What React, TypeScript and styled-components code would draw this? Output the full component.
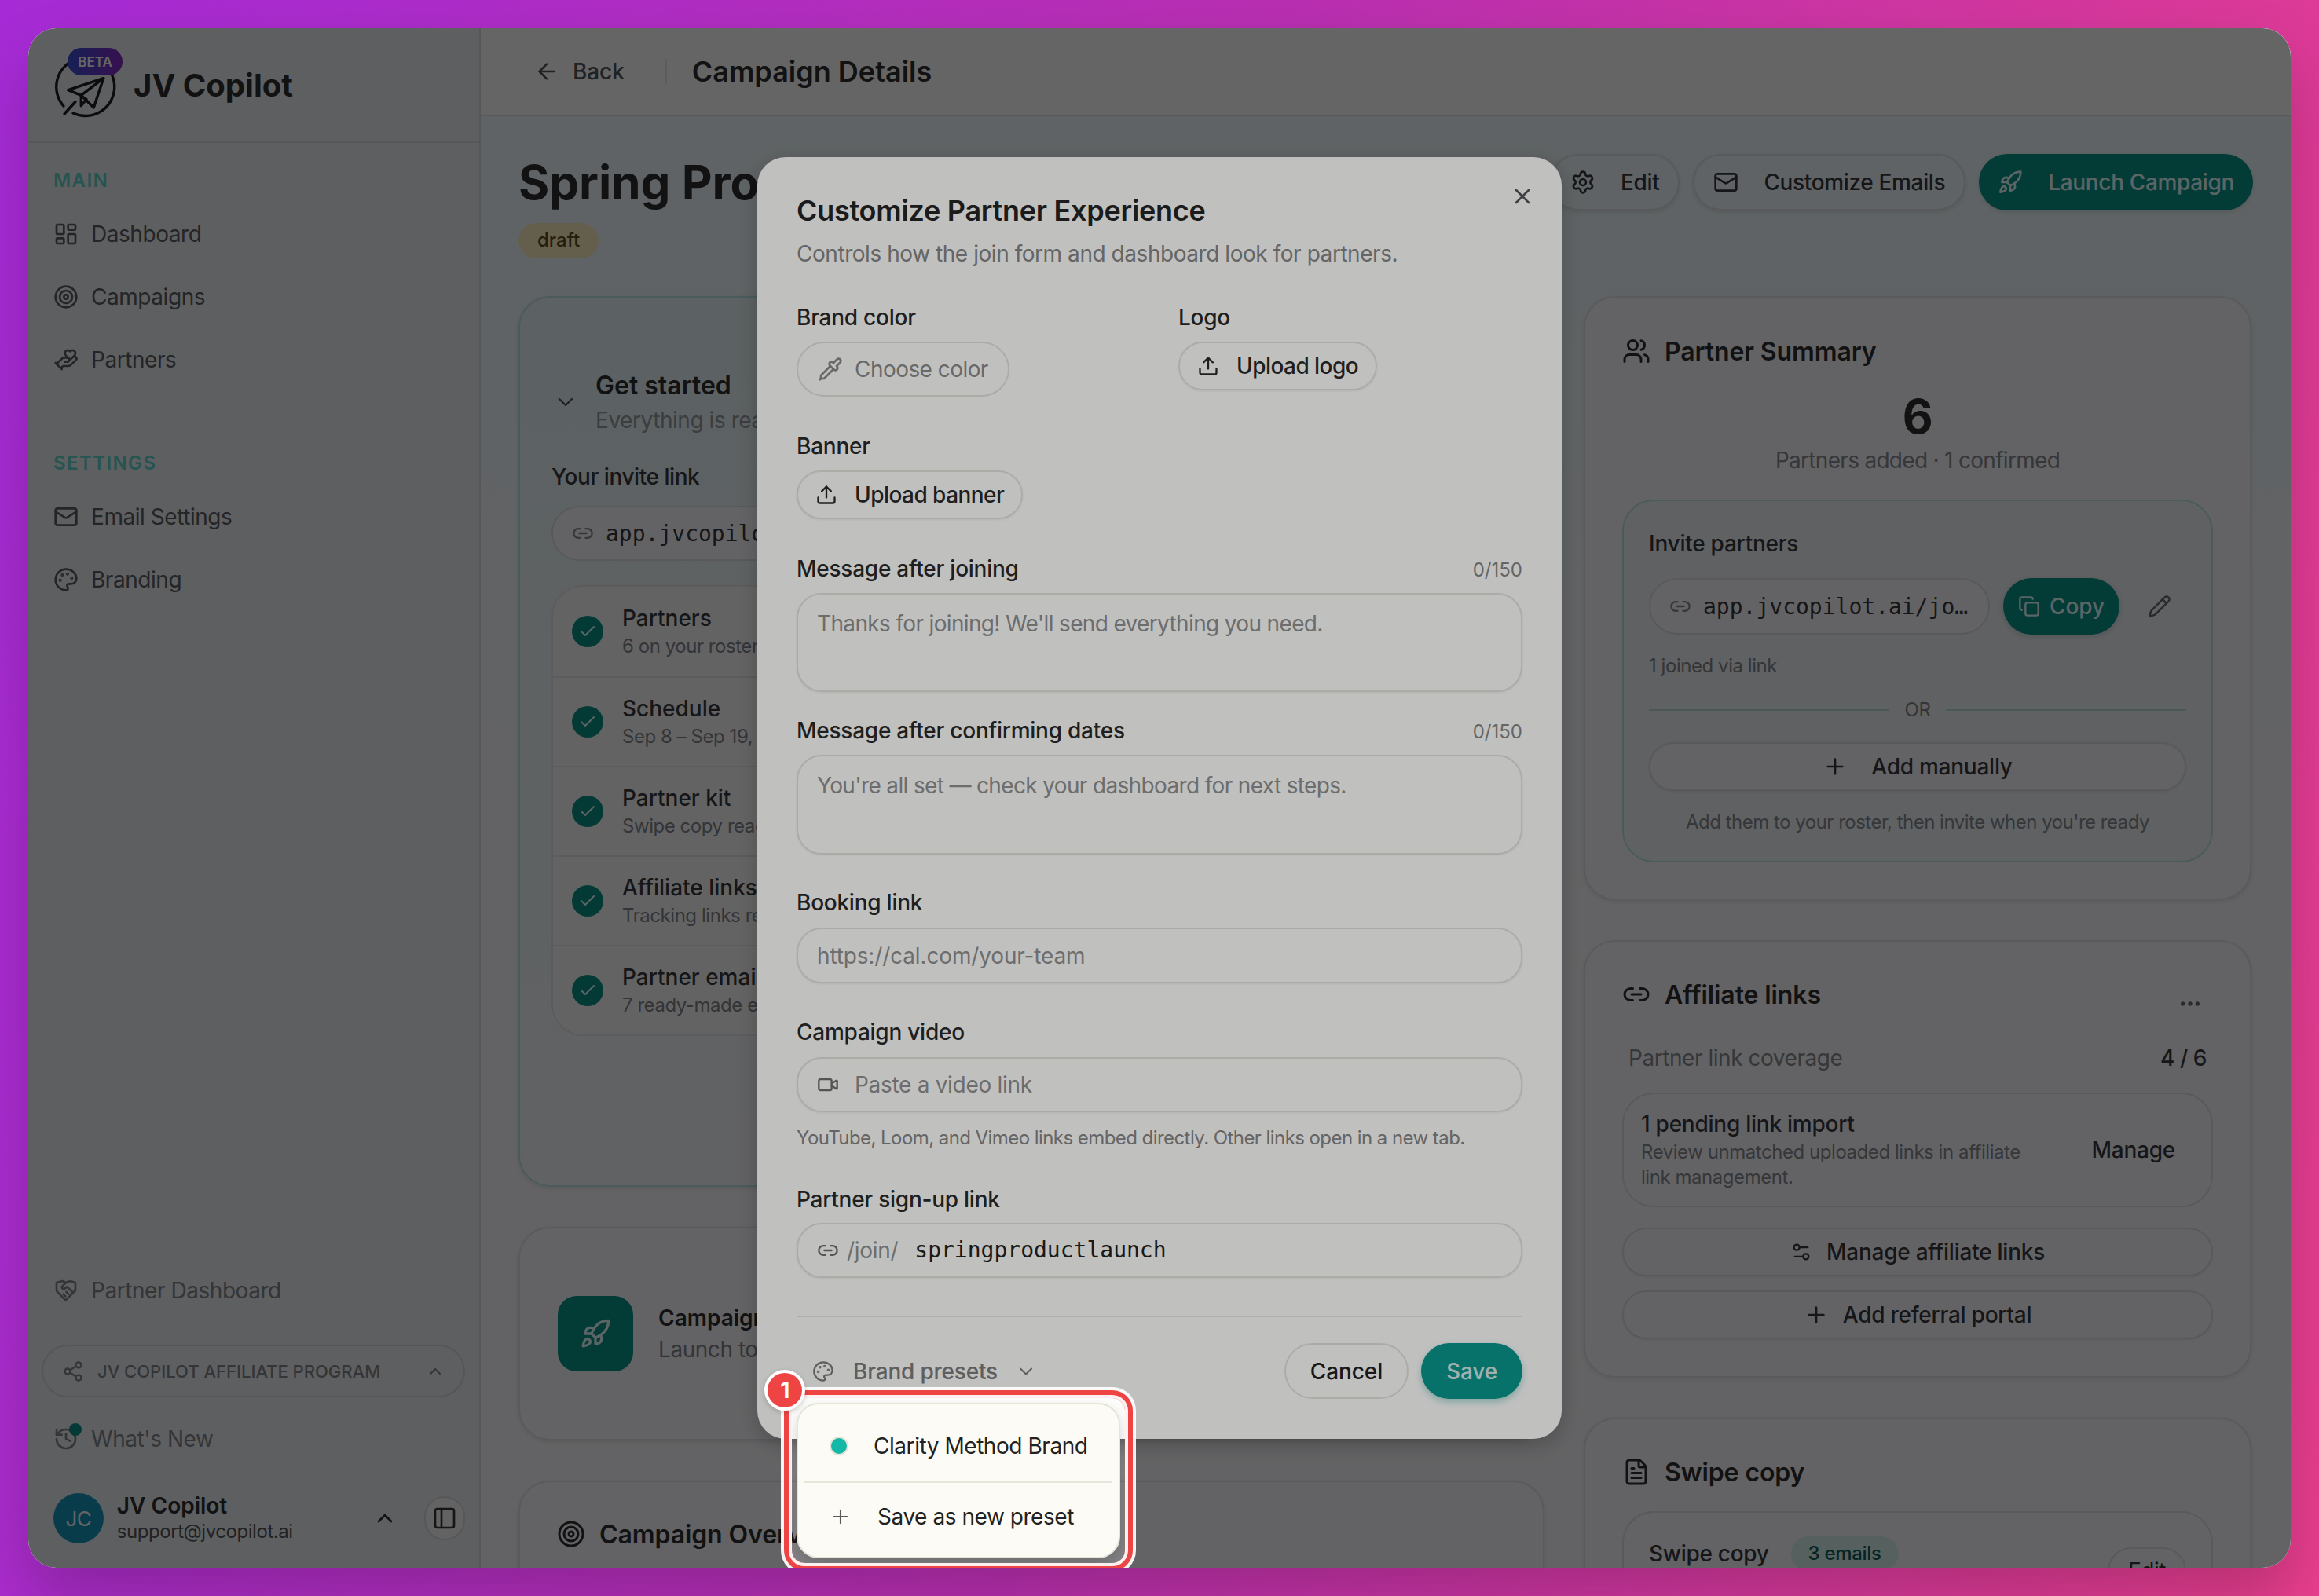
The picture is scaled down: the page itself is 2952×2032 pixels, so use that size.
import React from 'react'
import styled, { createGlobalStyle } from 'styled-components'
import {
  ArrowLeft, Check, ChevronDown, ChevronUp, Copy, Ellipsis, FileText, HandHeart, History, LayoutDashboard, Link2,
  Mail, Palette, PanelLeft, Pencil, Pipette, Plus, Rocket, Settings, Settings2, Share2, Target, Upload, Users, Video, X,
} from 'lucide-react'

const GlobalStyle = createGlobalStyle`
  html, body { margin: 0; padding: 0; overflow: hidden; }
  * { box-sizing: border-box; }
  body { font-family: Inter, "Liberation Sans", sans-serif; color: #2a2a2e; letter-spacing: -0.45px; }
  svg { flex-shrink: 0; }
`

const MONO = '"DejaVu Sans Mono", "Liberation Mono", monospace'

const Backdrop = styled.div`
  width: 2952px;
  height: 2032px;
  padding: 36px;
  background: linear-gradient(102deg, #a62bd6 0%, #b92fb0 50%, #e93e8e 100%);
`

const AppWindow = styled.div`
  position: relative;
  width: 2880px;
  height: 1960px;
  display: flex;
  border-radius: 36px;
  overflow: hidden;
  background: #fff;
  box-shadow: 0 40px 80px rgba(0, 0, 0, 0.2);
`

/* ---------- sidebar ---------- */

const Sidebar = styled.aside`
  width: 576px;
  flex-shrink: 0;
  display: flex;
  flex-direction: column;
  background: #eef0f5;
  border-right: 2px solid #dcdde2;
`

const Brand = styled.div`
  height: 146px;
  flex-shrink: 0;
  display: flex;
  align-items: center;
  gap: 19px;
  padding-left: 24px;
  border-bottom: 2px solid #dcdde2;
`

const BrandMark = styled.div`
  position: relative;
  width: 114px;
  height: 100px;
`

const BetaTag = styled.span`
  position: absolute;
  left: 26px;
  top: 3px;
  width: 70px;
  height: 35px;
  border-radius: 18px;
  display: flex;
  align-items: center;
  justify-content: center;
  font-size: 17px;
  font-weight: 600;
  letter-spacing: 0;
  color: #fff;
  background: linear-gradient(90deg, #3b54d6, #8a2bc9);
`

const BrandName = styled.span`
  font-size: 40px;
  font-weight: 700;
  letter-spacing: 0;
  color: #2f2f33;
  margin-left: -23px;
`

const NavSection = styled.div`
  padding: 32px 0 0 32px;
`

const SectionLabel = styled.div<{ $top?: number }>`
  height: 32px;
  line-height: 32px;
  font-size: 24px;
  font-weight: 600;
  letter-spacing: 1.4px;
  color: #62d6ce;
  margin-top: ${(p) => p.$top ?? 0}px;
  margin-bottom: 12px;
`

const NavItem = styled.div<{ $muted?: boolean }>`
  height: 80px;
  display: flex;
  align-items: center;
  gap: 16px;
  font-size: 28px;
  color: ${(p) => (p.$muted ? '#85878c' : '#5c5e63')};
`

const NavIconWrap = styled.span`
  position: relative;
  display: flex;
  width: 32px;
  height: 32px;
`

const NewDot = styled.span`
  position: absolute;
  right: -4px;
  top: -4px;
  width: 16px;
  height: 16px;
  border-radius: 50%;
  background: #0d9488;
`

const SidebarBottom = styled.div`
  margin-top: auto;
  padding: 0 18px 30px 32px;
`

const ProgramPill = styled.div`
  margin: 29px 0 13px -15px;
  height: 67px;
  border: 2px solid #d8d9de;
  border-radius: 34px;
  display: flex;
  align-items: center;
  gap: 17px;
  padding: 0 24px;
  font-size: 22px;
  font-weight: 500;
  letter-spacing: 0;
  color: #85878c;
  svg:last-child { margin-left: auto; }
`

const UserRow = styled.div`
  margin-top: 28px;
  display: flex;
  align-items: center;
`

const Avatar = styled.div`
  width: 64px;
  height: 64px;
  border-radius: 50%;
  background: #1a9abf;
  color: #fff;
  display: flex;
  align-items: center;
  justify-content: center;
  font-size: 26px;
`

const UserText = styled.div`
  margin-left: 17px;
  width: 326px;
`

const UserName = styled.div`
  font-size: 28px;
  font-weight: 600;
  line-height: 34px;
  letter-spacing: 0;
  color: #2f2f33;
`

const UserMail = styled.div`
  font-size: 24px;
  line-height: 32px;
  color: #55575c;
`

const SideToggle = styled.div`
  margin-left: 34px;
  width: 52px;
  height: 56px;
  border-radius: 26px;
  background: #fbfbfd;
  border: 2px solid #dcdde2;
  display: flex;
  align-items: center;
  justify-content: center;
`

/* ---------- main area ---------- */

const Main = styled.main`
  flex: 1;
  min-width: 0;
  display: flex;
  flex-direction: column;
  background: linear-gradient(180deg, #edfbff 0%, #fbfbff 55%);
`

const TopBar = styled.header`
  height: 112px;
  flex-shrink: 0;
  display: flex;
  align-items: center;
  padding-left: 68px;
  background: #fff;
  border-bottom: 2px solid #e2e3e8;
  font-size: 28px;
  font-weight: 500;
  color: #55575c;
`

const BackText = styled.span`
  margin-left: 17px;
  letter-spacing: -0.1px;
`

const BarDivider = styled.span`
  width: 2px;
  height: 32px;
  margin: 0 32px 0 52px;
  background: #e8e8ec;
`

const BarTitle = styled.span`
  font-size: 36px;
  font-weight: 600;
  letter-spacing: 0;
  color: #2f2f33;
`

const Content = styled.div`
  padding: 48px 48px 0 48px;
`

const TitleRow = styled.div`
  display: flex;
  justify-content: space-between;
  height: 133px;
`

const PageTitle = styled.h1`
  margin: 0;
  font-size: 60px;
  line-height: 72px;
  font-weight: 700;
  letter-spacing: 0;
  color: #2f2f33;
`

const DraftBadge = styled.span`
  display: inline-block;
  margin-top: 16px;
  height: 45px;
  line-height: 43px;
  padding: 0 24px;
  border-radius: 23px;
  font-size: 24px;
  font-weight: 500;
  letter-spacing: 0;
  color: #5a4f2a;
  background: #fdf0c0;
`

const ActionRow = styled.div`
  display: flex;
  gap: 17px;
`

const ActionButton = styled.div<{ $primary?: boolean }>`
  height: 72px;
  display: flex;
  align-items: center;
  gap: 32px;
  padding: 0 24px;
  border-radius: 36px;
  font-size: 28px;
  font-weight: 500;
  letter-spacing: -0.35px;
  color: ${(p) => (p.$primary ? '#e6ffff' : '#3a3a3e')};
  background: ${(p) => (p.$primary ? '#0a968c' : 'transparent')};
  border: ${(p) => (p.$primary ? 'none' : '2px solid #e0e1e6')};
  box-shadow: 0 2px 6px rgba(0, 0, 0, 0.12);
`

const Columns = styled.div`
  margin-top: 48px;
  display: grid;
  grid-template-columns: 1306px 850px;
  column-gap: 50px;
`

const Column = styled.div`
  display: flex;
  flex-direction: column;
  gap: 51px;
`

const Card = styled.section<{ $h?: number; $tint?: boolean }>`
  height: ${(p) => (p.$h ? `${p.$h}px` : 'auto')};
  border-radius: 40px;
  border: 2px solid ${(p) => (p.$tint ? '#bfe4e4' : '#e4e5ea')};
  background: ${(p) => (p.$tint ? 'linear-gradient(180deg, #e8f6fa 0%, #f6f8fb 100%)' : '#fbfbff')};
  box-shadow: 0 2px 6px rgba(0, 0, 0, 0.1);
`

const GetStarted = styled.div`
  padding: 92px 42px 0 40px;
`

const GetStartedHead = styled.div`
  display: flex;
  align-items: center;
  gap: 22px;
  margin-left: 2px;
`

const HeadTitle = styled.div`
  font-size: 32px;
  font-weight: 600;
  line-height: 40px;
  letter-spacing: 0;
  color: #2f2f33;
`

const HeadSub = styled.div`
  margin-top: 6px;
  font-size: 28px;
  line-height: 36px;
  color: #999ca1;
`

const LinkLabel = styled.div`
  margin-top: 34px;
  font-size: 28px;
  line-height: 40px;
  font-weight: 500;
  color: #3a3a3e;
`

const LinkField = styled.div<{ $h?: number; $top?: number }>`
  height: ${(p) => p.$h ?? 72}px;
  margin-top: ${(p) => p.$top ?? 0}px;
  min-width: 0;
  flex: 1;
  display: flex;
  align-items: center;
  gap: 15px;
  padding: 0 22px 0 24px;
  border: 2px solid #e0e1e6;
  border-radius: 36px;
  background: #fbfbff;
`

const MonoText = styled.span`
  font-family: ${MONO};
  font-size: 28px;
  letter-spacing: 0;
  color: #3a3a3e;
  white-space: nowrap;
  overflow: hidden;
  text-overflow: ellipsis;
`

const Checklist = styled.div`
  margin-top: 31px;
  border-radius: 40px;
  border: 2px solid #e8e8ec;
  background: #fbfbfe;
  overflow: hidden;
`

const ChecklistRow = styled.div`
  height: 114px;
  display: flex;
  align-items: center;
  gap: 24px;
  padding-left: 24px;
  border-top: 2px solid #e8e8ec;
  &:first-child { border-top: none; }
`

const CheckCircle = styled.span`
  width: 40px;
  height: 40px;
  flex-shrink: 0;
  border-radius: 50%;
  background: #0d9488;
  color: #e6ffff;
  display: flex;
  align-items: center;
  justify-content: center;
`

const RowTitle = styled.div`
  font-size: 28px;
  line-height: 36px;
  font-weight: 500;
  letter-spacing: 0;
  color: #3a3a3e;
  white-space: nowrap;
  margin-bottom: 2px;
`

const RowSub = styled.div`
  font-size: 24px;
  line-height: 32px;
  color: #85878c;
  white-space: nowrap;
`

const LaunchCard = styled.div`
  height: 100%;
  display: flex;
  align-items: center;
  gap: 32px;
  padding-left: 48px;
`

const RocketTile = styled.div`
  width: 96px;
  height: 96px;
  border-radius: 24px;
  background: #0a968c;
  color: #e6ffff;
  display: flex;
  align-items: center;
  justify-content: center;
`

const LaunchTitle = styled.div`
  font-size: 28px;
  line-height: 36px;
  font-weight: 600;
  letter-spacing: 0;
  color: #2f2f33;
`

const LaunchSub = styled.div`
  margin-top: 4px;
  font-size: 28px;
  line-height: 36px;
  color: #85878c;
`

const CardHead = styled.div<{ $top: number }>`
  display: flex;
  align-items: center;
  gap: 18px;
  height: 40px;
  margin-top: ${(p) => p.$top}px;
  font-size: 32px;
  font-weight: 600;
  letter-spacing: -0.1px;
  color: #2f2f33;
`

const CardBody = styled.div<{ $bottom?: number }>`
  padding: 0 47px ${(p) => p.$bottom ?? 46}px;
  overflow: hidden;
`

const BigNumber = styled.div`
  margin-top: 27px;
  text-align: center;
  font-size: 60px;
  line-height: 72px;
  font-weight: 700;
  color: #2f2f33;
`

const Centered = styled.div<{ $top: number; $size: number }>`
  margin-top: ${(p) => p.$top}px;
  text-align: center;
  font-size: ${(p) => p.$size}px;
  line-height: ${(p) => p.$size + 8}px;
  letter-spacing: ${(p) => (p.$size > 24 ? -0.7 : -0.5)}px;
  color: #8a8c91;
`

const InviteBox = styled.div`
  margin-top: 32px;
  padding: 36px 32px 33px;
  border: 2px solid #bfe4e4;
  border-radius: 40px;
  background: #f0f6fa;
`

const BoxTitle = styled.div`
  font-size: 28px;
  line-height: 36px;
  font-weight: 500;
  letter-spacing: -0.25px;
  color: #3a3a3e;
`

const InviteRow = styled.div`
  margin-top: 26px;
  display: flex;
  align-items: center;
  gap: 17px;
`

const CopyButton = styled.div`
  width: 148px;
  height: 72px;
  flex-shrink: 0;
  border-radius: 36px;
  background: #0a968c;
  color: #e6ffff;
  display: flex;
  align-items: center;
  justify-content: center;
  gap: 12px;
  font-size: 28px;
  font-weight: 500;
  letter-spacing: -0.1px;
  box-shadow: 0 2px 8px rgba(0, 0, 0, 0.15);
`

const PencilWrap = styled.span`
  margin-left: 19px;
  margin-right: 19px;
  display: flex;
  color: #6a6c71;
`

const SmallNote = styled.div`
  margin-top: 24px;
  font-size: 24px;
  line-height: 32px;
  color: #85878c;
`

const OrRow = styled.div`
  margin-top: 24px;
  display: flex;
  align-items: center;
  gap: 20px;
  font-size: 24px;
  line-height: 32px;
  color: #85878c;
  &::before, &::after { content: ''; flex: 1; height: 2px; background: #b8dcdc; }
`

const WideButton = styled.div<{ $top: number; $gap: number }>`
  margin-top: ${(p) => p.$top}px;
  height: 62px;
  display: flex;
  align-items: center;
  justify-content: center;
  gap: ${(p) => p.$gap}px;
  border: 2px solid #e0e1e6;
  border-radius: 31px;
  font-size: 28px;
  font-weight: 500;
  letter-spacing: -0.25px;
  color: #3a3a3e;
  background: #fbfbff;
  box-shadow: 0 1px 3px rgba(0, 0, 0, 0.08);
`

const MoreDots = styled.span`
  margin-left: auto;
  margin-right: 13px;
  margin-top: 24px;
  display: flex;
  color: #6a6c71;
`

const CoverageRow = styled.div`
  margin-top: 43px;
  padding: 0 8px;
  display: flex;
  justify-content: space-between;
  font-size: 28px;
  line-height: 36px;
  color: #8a8c91;
  strong { font-weight: 500; color: #3a3a3e; }
`

const PendingBox = styled.div`
  margin-top: 26px;
  height: 146px;
  padding: 0 46px 0 22px;
  border: 2px solid #e0e1e6;
  border-radius: 40px;
  display: flex;
  align-items: center;
  justify-content: space-between;
`

const PendingText = styled.div`
  width: 510px;
  p { margin: 2px 0 0; font-size: 24px; line-height: 32px; color: #8a8c91; }
`

const PendingManage = styled.span`
  font-size: 28px;
  font-weight: 500;
  letter-spacing: -0.25px;
  color: #3a3a3e;
`

const SwipeBox = styled.div`
  margin-top: 30px;
  height: 200px;
  padding: 30px 32px 0;
  border: 2px solid #e0e1e6;
  border-radius: 40px;
  display: flex;
  align-items: flex-start;
  justify-content: space-between;
`

const SwipeLabel = styled.div`
  display: flex;
  align-items: center;
  gap: 28px;
  font-size: 28px;
  font-weight: 500;
  letter-spacing: -0.3px;
  color: #3a3a3e;
`

const EmailsBadge = styled.span`
  height: 44px;
  line-height: 44px;
  padding: 0 22px;
  border-radius: 22px;
  font-size: 24px;
  font-weight: 500;
  color: #0f5e58;
  background: #d8f4ef;
`

const SmallEdit = styled.span`
  margin-top: 14px;
  width: 100px;
  height: 60px;
  line-height: 56px;
  text-align: center;
  font-size: 28px;
  color: #3a3a3e;
  border: 2px solid #e0e1e6;
  border-radius: 30px;
`

/* ---------- modal and tour highlight ---------- */

const Scrim = styled.div`
  position: absolute;
  inset: 0;
  background: rgba(0, 0, 0, 0.48);
`

const Modal = styled.div`
  position: absolute;
  left: 928px;
  top: 164px;
  width: 1024px;
  height: 1632px;
  padding: 44px 50px 0;
  border-radius: 36px;
  background: #fdfdfc;
  box-shadow: 0 8px 24px rgba(0, 0, 0, 0.2);
  color: #242424;
`

const CloseButton = styled.span`
  position: absolute;
  right: 34px;
  top: 34px;
  display: flex;
  color: #55555a;
`

const ModalTitle = styled.h2`
  margin: 0;
  font-size: 36px;
  line-height: 48px;
  font-weight: 600;
  letter-spacing: -0.27px;
`

const ModalSub = styled.p`
  margin: 11px 0 0;
  font-size: 28px;
  line-height: 40px;
  color: #858585;
`

const TwoCols = styled.div`
  margin-top: 43px;
  display: grid;
  grid-template-columns: 486px 1fr;
  align-items: start;
`

const Field = styled.div<{ $top?: number }>`
  margin-top: ${(p) => p.$top ?? 0}px;
`

const LabelRow = styled.div`
  display: flex;
  justify-content: space-between;
  align-items: center;
  height: 36px;
`

const Label = styled.label`
  font-size: 28px;
  font-weight: 500;
  letter-spacing: -0.25px;
  color: #2a2a2a;
`

const Counter = styled.span`
  margin-top: 3px;
  font-size: 24px;
  letter-spacing: 0;
  color: #858585;
`

const UploadButton = styled.div<{ $mute?: boolean }>`
  display: inline-flex;
  align-items: center;
  height: ${(p) => (p.$mute ? 70 : 62)}px;
  gap: ${(p) => (p.$mute ? 15 : 22)}px;
  margin-top: 13px;
  padding: 0 ${(p) => (p.$mute ? '25px' : '22px')};
  border: 2px solid #e2e2dc;
  border-radius: ${(p) => (p.$mute ? 35 : 31)}px;
  font-size: 28px;
  font-weight: ${(p) => (p.$mute ? 400 : 500)};
  letter-spacing: -0.55px;
  color: ${(p) => (p.$mute ? '#8a8a8a' : '#2a2a2a')};
  box-shadow: ${(p) => (p.$mute ? 'none' : '0 1px 3px rgba(0,0,0,.08)')};
`

const TextBox = styled.div<{ $top?: number; $h: number; $gap?: number; $area?: boolean; $tight?: number }>`
  margin-top: ${(p) => p.$top ?? 12}px;
  height: ${(p) => p.$h}px;
  padding: ${(p) => (p.$area ? '19px 24px 0' : '0 24px')};
  display: flex;
  align-items: ${(p) => (p.$area ? 'flex-start' : 'center')};
  gap: ${(p) => p.$gap ?? 16}px;
  border: 2px solid #e2e2dc;
  border-radius: 32px;
  background: #fdfdfc;
  box-shadow: 0 1px 3px rgba(0, 0, 0, 0.08);
  font-size: 28px;
  line-height: 36px;
  letter-spacing: ${(p) => p.$tight ?? -0.65}px;
  color: #909090;
  white-space: nowrap;
`

const HelpText = styled.div`
  margin-top: 17px;
  font-size: 24px;
  line-height: 32px;
  letter-spacing: -0.56px;
  color: #858585;
`

const JoinMono = styled(MonoText)`
  margin-left: 11px;
  color: #222;
`

const FooterRule = styled.div`
  margin-top: 48px;
  height: 2px;
  background: #e6e6e0;
`

const Footer = styled.div`
  margin-top: 33px;
  display: flex;
  align-items: center;
  height: 71px;
`

const PresetTrigger = styled.div`
  margin-left: 20px;
  display: flex;
  align-items: center;
  gap: 24px;
  font-size: 28px;
  font-weight: 500;
  letter-spacing: -0.2px;
  color: #7c7c7c;
  svg:last-child { margin-left: -2px; }
`

const FooterActions = styled.div`
  margin-left: auto;
  display: flex;
  gap: 16px;
`

const FooterButton = styled.div<{ $save?: boolean }>`
  height: 71px;
  width: ${(p) => (p.$save ? 129 : 158)}px;
  display: flex;
  align-items: center;
  justify-content: center;
  border-radius: 36px;
  font-size: 28px;
  font-weight: 500;
  letter-spacing: -0.1px;
  color: ${(p) => (p.$save ? '#d4e8e6' : '#222')};
  background: ${(p) => (p.$save ? '#0a968c' : 'transparent')};
  border: ${(p) => (p.$save ? 'none' : '2px solid #e2e2dc')};
  box-shadow: ${(p) => (p.$save ? '0 4px 10px rgba(13,148,136,.35)' : 'none')};
`

const PresetMenu = styled.div`
  position: absolute;
  left: 978px;
  top: 1750px;
  width: 412px;
  height: 198px;
  border-radius: 28px;
  border: 2px solid #e6e3d8;
  background: #fcfbf6;
  box-shadow: 0 8px 18px rgba(0, 0, 0, 0.16);
  padding: 0 8px;
`

const MenuRow = styled.div<{ $pad: number; $gap: number; $h: number; $shift: number }>`
  height: ${(p) => p.$h}px;
  display: flex;
  align-items: center;
  gap: ${(p) => p.$gap}px;
  padding-left: ${(p) => p.$pad}px;
  padding-top: ${(p) => Math.max(p.$shift, 0)}px;
  padding-bottom: ${(p) => Math.max(-p.$shift, 0)}px;
  font-size: 28px;
  color: #222;
  & + & { border-top: 2px solid #e8e5da; }
`

const Swatch = styled.span`
  width: 24px;
  height: 24px;
  border-radius: 50%;
  background: #14b8a6;
  border: 2px solid #e6e3d8;
`

const TourHole = styled.div`
  position: absolute;
  left: 972px;
  top: 1744px;
  width: 424px;
  height: 210px;
  border-radius: 16px;
  pointer-events: none;
  box-shadow:
    0 0 0 4px rgba(255, 255, 255, 0.92),
    0 0 0 10px #ef4444,
    0 0 0 14px rgba(255, 255, 255, 0.92),
    0 0 0 4000px rgba(0, 0, 0, 0.24);
`

const TourBadge = styled.span`
  position: absolute;
  left: 937px;
  top: 1708px;
  width: 52px;
  height: 52px;
  border-radius: 50%;
  background: #ef4444;
  border: 4px solid #fff;
  color: #fff;
  font-size: 28px;
  font-weight: 700;
  display: flex;
  align-items: center;
  justify-content: center;
  box-shadow: 0 2px 6px rgba(0, 0, 0, 0.2);
`

/* ---------- drawings ---------- */

function PlaneLogo() {
  return (
    <svg width="120" height="100" viewBox="0 0 120 100" fill="none" stroke="#1f1f22" strokeWidth="3.4" strokeLinecap="round" strokeLinejoin="round">
      <path d="M33 86A37 37 0 1 0 21 77" />
      <path d="M71.7 41.7 26.7 56.7l16.6 6.6" />
      <path d="M71.7 41.7 43.3 63.3v13.4l6.7-8.4" />
      <path d="M71.7 41.7 59.3 79 43.3 63.3" />
      <path d="M22 87 36 71.5" />
    </svg>
  )
}

function ShieldShake() {
  return (
    <svg width="32" height="32" viewBox="0 0 24 24" fill="none" stroke="currentColor" strokeWidth="2" strokeLinecap="round" strokeLinejoin="round">
      <path d="M3 4.5 8.5 3l3.5 1.5L16 3l5 1.5V12l-8.5 8.5a1.2 1.2 0 0 1-1.7 0L3.6 13 3 12z" />
      <path d="M12 4.5 8.5 8a1.6 1.6 0 0 0 2.3 2.2l2.2-1.7 5.2 5" />
      <path d="m14.5 15.5-2-2M11.5 17.5l-2-2" />
    </svg>
  )
}

const STEPS = [
  { title: 'Partners', sub: '6 on your roster' },
  { title: 'Schedule', sub: 'Sep 8 – Sep 19, 2025' },
  { title: 'Partner kit', sub: 'Swipe copy ready' },
  { title: 'Affiliate links', sub: 'Tracking links ready' },
  { title: 'Partner emails', sub: '7 ready-made emails' },
]

export default function App() {
  return (
    <Backdrop>
      <GlobalStyle />
      <AppWindow>
        <Sidebar>
          <Brand>
            <BrandMark>
              <PlaneLogo />
              <BetaTag>BETA</BetaTag>
            </BrandMark>
            <BrandName>JV Copilot</BrandName>
          </Brand>
          <NavSection>
            <SectionLabel>MAIN</SectionLabel>
            <NavItem><LayoutDashboard size={32} />Dashboard</NavItem>
            <NavItem><Target size={32} />Campaigns</NavItem>
            <NavItem><HandHeart size={32} />Partners</NavItem>
            <SectionLabel $top={76}>SETTINGS</SectionLabel>
            <NavItem><Mail size={32} />Email Settings</NavItem>
            <NavItem><Palette size={32} />Branding</NavItem>
          </NavSection>
          <SidebarBottom>
            <NavItem $muted><ShieldShake />Partner Dashboard</NavItem>
            <ProgramPill>
              <Share2 size={28} />
              <span>JV COPILOT AFFILIATE PROGRAM</span>
              <ChevronUp size={24} />
            </ProgramPill>
            <NavItem $muted>
              <NavIconWrap><History size={32} /><NewDot /></NavIconWrap>
              What's New
            </NavItem>
            <UserRow>
              <Avatar>JC</Avatar>
              <UserText>
                <UserName>JV Copilot</UserName>
                <UserMail>support@jvcopilot.ai</UserMail>
              </UserText>
              <ChevronUp size={32} color="#2f2f33" />
              <SideToggle><PanelLeft size={32} color="#3a3a3e" /></SideToggle>
            </UserRow>
          </SidebarBottom>
        </Sidebar>

        <Main>
          <TopBar>
            <ArrowLeft size={32} />
            <BackText>Back</BackText>
            <BarDivider />
            <BarTitle>Campaign Details</BarTitle>
          </TopBar>
          <Content>
            <TitleRow>
              <div>
                <PageTitle>Spring Product Launch</PageTitle>
                <DraftBadge>draft</DraftBadge>
              </div>
              <ActionRow>
                <ActionButton><Settings size={32} />Edit</ActionButton>
                <ActionButton><Mail size={32} />Customize Emails</ActionButton>
                <ActionButton $primary><Rocket size={32} />Launch Campaign</ActionButton>
              </ActionRow>
            </TitleRow>
            <Columns>
              <Column>
                <Card $h={1134} $tint>
                  <GetStarted>
                    <GetStartedHead>
                      <ChevronDown size={32} color="#55575c" strokeWidth={1.8} />
                      <div>
                        <HeadTitle>Get started</HeadTitle>
                        <HeadSub>Everything is ready to launch</HeadSub>
                      </div>
                    </GetStartedHead>
                    <LinkLabel>Your invite link</LinkLabel>
                    <LinkField $h={70} $top={17}>
                      <Link2 size={28} color="#8a8c91" />
                      <MonoText>app.jvcopilot.ai/join/springproductlaunch</MonoText>
                    </LinkField>
                    <Checklist>
                      {STEPS.map((s) => (
                        <ChecklistRow key={s.title}>
                          <CheckCircle><Check size={24} /></CheckCircle>
                          <div>
                            <RowTitle>{s.title}</RowTitle>
                            <RowSub>{s.sub}</RowSub>
                          </div>
                        </ChecklistRow>
                      ))}
                    </Checklist>
                  </GetStarted>
                </Card>
                <Card $h={272}>
                  <LaunchCard>
                    <RocketTile><Rocket size={40} /></RocketTile>
                    <div>
                      <LaunchTitle>Campaign ready</LaunchTitle>
                      <LaunchSub>Launch to start sending</LaunchSub>
                    </div>
                  </LaunchCard>
                </Card>
                <Card $h={300}>
                  <CardBody>
                    <CardHead $top={46}><Target size={36} />Campaign Overview</CardHead>
                  </CardBody>
                </Card>
              </Column>

              <Column>
                <Card>
                  <CardBody>
                    <CardHead $top={48}><Users size={36} />Partner Summary</CardHead>
                    <BigNumber>6</BigNumber>
                    <Centered $top={2} $size={28}>Partners added · 1 confirmed</Centered>
                    <InviteBox>
                      <BoxTitle>Invite partners</BoxTitle>
                      <InviteRow>
                        <LinkField>
                          <Link2 size={28} color="#8a8c91" />
                          <MonoText>app.jvcopilot.ai/join/springproductlaunch</MonoText>
                        </LinkField>
                        <CopyButton><Copy size={28} />Copy</CopyButton>
                        <PencilWrap><Pencil size={30} /></PencilWrap>
                      </InviteRow>
                      <SmallNote>1 joined via link</SmallNote>
                      <OrRow>OR</OrRow>
                      <WideButton $top={25} $gap={30}><Plus size={32} />Add manually</WideButton>
                      <Centered $top={24} $size={24}>Add them to your roster, then invite when you're ready</Centered>
                    </InviteBox>
                  </CardBody>
                </Card>
                <Card>
                  <CardBody $bottom={47}>
                    <CardHead $top={47}>
                      <Link2 size={36} />Affiliate links
                      <MoreDots><Ellipsis size={32} /></MoreDots>
                    </CardHead>
                    <CoverageRow><span>Partner link coverage</span><strong>4 / 6</strong></CoverageRow>
                    <PendingBox>
                      <PendingText>
                        <BoxTitle>1 pending link import</BoxTitle>
                        <p>Review unmatched uploaded links in affiliate link management.</p>
                      </PendingText>
                      <PendingManage>Manage</PendingManage>
                    </PendingBox>
                    <WideButton $top={26} $gap={18}><Settings2 size={28} />Manage affiliate links</WideButton>
                    <WideButton $top={18} $gap={18}><Plus size={32} />Add referral portal</WideButton>
                  </CardBody>
                </Card>
                <Card $h={300}>
                  <CardBody>
                    <CardHead $top={47}><FileText size={36} />Swipe copy</CardHead>
                    <SwipeBox>
                      <SwipeLabel>Swipe copy<EmailsBadge>3 emails</EmailsBadge></SwipeLabel>
                      <SmallEdit>Edit</SmallEdit>
                    </SwipeBox>
                  </CardBody>
                </Card>
              </Column>
            </Columns>
          </Content>
        </Main>

        <Scrim />

        <Modal>
          <CloseButton><X size={32} /></CloseButton>
          <ModalTitle>Customize Partner Experience</ModalTitle>
          <ModalSub>Controls how the join form and dashboard look for partners.</ModalSub>
          <TwoCols>
            <div>
              <LabelRow><Label>Brand color</Label></LabelRow>
              <UploadButton $mute><Pipette size={32} />Choose color</UploadButton>
            </div>
            <div>
              <LabelRow><Label>Logo</Label></LabelRow>
              <UploadButton><Upload size={28} />Upload logo</UploadButton>
            </div>
          </TwoCols>
          <Field $top={45}>
            <LabelRow><Label>Banner</Label></LabelRow>
            <UploadButton><Upload size={28} />Upload banner</UploadButton>
          </Field>
          <Field $top={45}>
            <LabelRow><Label>Message after joining</Label><Counter>0/150</Counter></LabelRow>
            <TextBox $area $h={126} $top={13}>Thanks for joining! We'll send everything you need.</TextBox>
          </Field>
          <Field $top={31}>
            <LabelRow><Label>Message after confirming dates</Label><Counter>0/150</Counter></LabelRow>
            <TextBox $area $h={127} $top={13}>You're all set — check your dashboard for next steps.</TextBox>
          </Field>
          <Field $top={43}>
            <LabelRow><Label>Booking link</Label></LabelRow>
            <TextBox $h={71} $top={14} $tight={-0.15}>https://cal.com/your-team</TextBox>
          </Field>
          <Field $top={44}>
            <LabelRow><Label>Campaign video</Label></LabelRow>
            <TextBox $h={70} $top={14} $gap={20} $tight={-0.3}><Video size={28} color="#6f6f6f" />Paste a video link</TextBox>
          </Field>
          <HelpText>YouTube, Loom, and Vimeo links embed directly. Other links open in a new tab.</HelpText>
          <Field $top={44}>
            <LabelRow><Label>Partner sign-up link</Label></LabelRow>
            <TextBox $h={70} $top={12} $gap={10} $tight={-0.3}>
              <Link2 size={28} color="#6f6f6f" />/join/
              <JoinMono>springproductlaunch</JoinMono>
            </TextBox>
          </Field>
          <FooterRule />
          <Footer>
            <PresetTrigger>
              <Palette size={28} />
              Brand presets
              <ChevronDown size={28} strokeWidth={1.8} />
            </PresetTrigger>
            <FooterActions>
              <FooterButton>Cancel</FooterButton>
              <FooterButton $save>Save</FooterButton>
            </FooterActions>
          </Footer>
        </Modal>

        <PresetMenu>
          <MenuRow $pad={32} $gap={32} $h={98} $shift={8}><Swatch />Clarity Method Brand</MenuRow>
          <MenuRow $pad={32} $gap={33} $h={96} $shift={-8}><Plus size={28} color="#5a5a5a" strokeWidth={1.8} />Save as new preset</MenuRow>
        </PresetMenu>
        <TourHole />
        <TourBadge>1</TourBadge>
      </AppWindow>
    </Backdrop>
  )
}
